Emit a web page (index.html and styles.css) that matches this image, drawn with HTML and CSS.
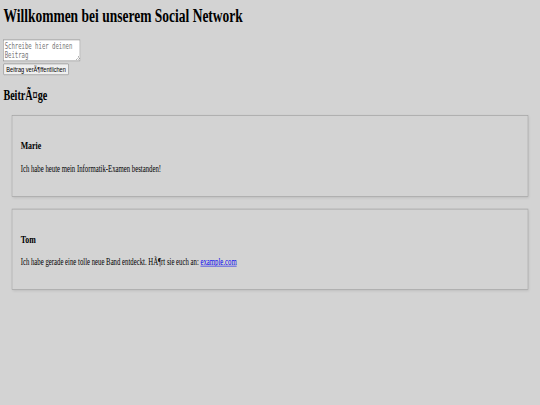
FILE: index.html
```html
<!DOCTYPE html>
<html lang="de">
<head>
<meta charset="utf-8">
<title>Social Network</title>
<link rel="stylesheet" href="styles.css">
</head>
<body>
<div class="viewport">
<div class="page">
  <h1 class="title">Willkommen bei unserem Social Network</h1>
  <form class="composer">
    <textarea class="composer-input" placeholder="Schreibe hier deinen Beitrag"></textarea><br>
    <button type="button" class="composer-button">Beitrag verÃ¶ffentlichen</button>
  </form>
  <h2 class="section-title">BeitrÃ¤ge</h2>
  <div class="post">
    <h3 class="post-author">Marie</h3>
    <p class="post-text">Ich habe heute mein Informatik-Examen bestanden!</p>
  </div>
  <div class="post">
    <h3 class="post-author">Tom</h3>
    <p class="post-text">Ich habe gerade eine tolle neue Band entdeckt. HÃ¶rt sie euch an: <a class="post-link" href="#">example.com</a></p>
  </div>
</div>
</div>
</body>
</html>
```

FILE: styles.css
```css
html, body {
  margin: 0;
  padding: 0;
  background: #d3d3d3;
  overflow: hidden;
}

.viewport {
  width: 540px;
  height: 405px;
  overflow: hidden;
}

.page {
  box-sizing: border-box;
  width: 1280px;
  height: 675px;
  padding: 8px;
  transform: scale(0.421875, 0.6);
  transform-origin: 0 0;
  font-family: "Liberation Serif", "Times New Roman", serif;
  color: #000;
}

.title {
  font-size: 32px;
  font-weight: bold;
  margin: 0 0 21.44px;
}

.composer {
  margin: 0;
}

.composer-input {
  font-family: "DejaVu Sans Mono", monospace;
  font-size: 13.333px;
  background: #fff;
  border: 1px solid #767676;
  padding: 2px;
}

.composer-input::placeholder {
  color: #757575;
}

.composer-button {
  font-family: "Liberation Sans", Arial, sans-serif;
  font-size: 13.333px;
  color: #000;
  background: #efefef;
  border: 1px solid #767676;
  border-radius: 2px;
  padding: 1px 6px;
}

.section-title {
  font-size: 24px;
  font-weight: bold;
  margin: 19.92px 0;
}

.post {
  margin: 20px;
  padding: 20px;
  border: 1px solid #999;
  box-shadow: 2px 2px 5px rgba(0, 0, 0, 0.1);
}

.post-author {
  font-size: 18.72px;
  font-weight: bold;
  margin: 18.72px 0;
}

.post-text {
  font-size: 16px;
  margin: 16px 0;
}

.post-link {
  color: #0000ee;
}
```
